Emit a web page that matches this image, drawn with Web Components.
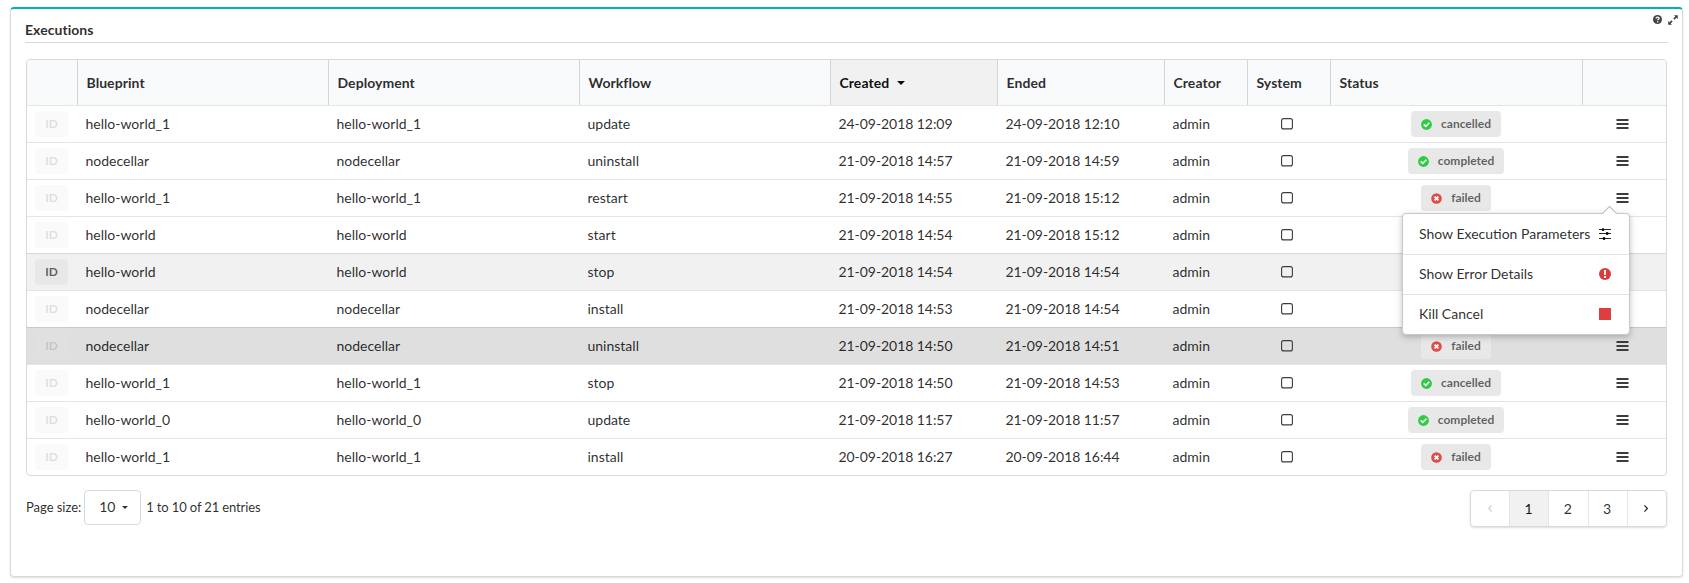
<!DOCTYPE html>
<html lang="en">
<head>
<meta charset="utf-8">
<title>Executions</title>
<style>
html,body{margin:0;background:#fff;font:14px/18px Lato,"Liberation Sans",sans-serif;color:rgba(0,0,0,.84)}
body{padding:7px 6px 6px 10px;height:583px;box-sizing:border-box}
</style>
</head>
<body>
<ui-widget>
  <span slot="title">Executions</span>
  <executions-table></executions-table>
  <table-footer></table-footer>
</ui-widget>
<script>
const define = (name, css, render) => customElements.define(name, class extends HTMLElement {
  connectedCallback() {
    if (this.shadowRoot) return;
    const t = document.createElement('template');
    t.innerHTML = `<style>*,:host{box-sizing:border-box}${css}</style>${render(this)}`;
    this.attachShadow({mode: 'open'}).append(t.content.cloneNode(true));
  }
});

const icons = {
  help: [9, 9, '<circle cx="4.5" cy="4.5" r="4.5" fill="currentColor"/><path d="M3 3.5Q3.1 2.1 4.6 2.1T6.1 3.4C6.1 4.3 4.6 4.3 4.6 5.3M4.6 6.2V7.4" fill="none" stroke="#fff" stroke-width="1.3"/>'],
  expand: [10, 10, '<path d="M6 .2H9.8V4L8.5 2.7 6.4 4.7 5.3 3.6 7.3 1.5ZM.2 6L1.5 7.3 3.6 5.3 4.7 6.4 2.7 8.5 4 9.8H.2Z" fill="currentColor"/>'],
  box: [12, 12, '<rect x=".6" y=".6" width="10.8" height="10.3" rx="2" fill="none" stroke="currentColor" stroke-width="1.1"/>'],
  menu: [13, 10, '<path d="M.5 0H12.5V2H.5ZM.5 4H12.5V6H.5ZM.5 8H12.5V10H.5Z" fill="currentColor"/>'],
  check: [11, 11, '<circle cx="5.5" cy="5.5" r="5.4" fill="#2ecc40"/><path d="M2.7 5.3L4.8 7.3 8.4 3.8" fill="none" stroke="#fff" stroke-width="1.6"/>'],
  fail: [11, 11, '<circle cx="5.5" cy="5.5" r="5.3" fill="#e04b4b"/><path d="M3.6 3.6L7.4 7.4M7.4 3.6L3.6 7.4" stroke="#fff" stroke-width="1.9"/>'],
  sliders: [12, 12, '<path d="M0 1.5H12M0 5.5H12M0 10.5H12" stroke="currentColor" stroke-width="1.1"/><path d="M4 .2V3M8.2 4.1V6.9M5 9.1V11.9" stroke="currentColor" stroke-width="2.2"/>'],
  error: [12, 12, '<circle cx="6" cy="6" r="6" fill="#db3b3b"/><path d="M4.9 2H7.1L6.8 7H5.2ZM5 8H7V10H5Z" fill="#fff"/>'],
  stop: [12, 12, '<path d="M0 0H12V12H0Z" fill="#e03e3e"/>'],
  caret: [8, 4, '<path d="M0 0H8L4 4Z" fill="currentColor"/>'],
  left: [4, 7, '<path d="M3.6.4L.7 3.5 3.6 6.6" fill="none" stroke="currentColor" stroke-width="1.1"/>'],
  right: [4, 7, '<path d="M.4.4L3.3 3.5.4 6.6" fill="none" stroke="currentColor" stroke-width="1.2"/>']
};
define('ui-icon', ':host{display:inline-flex;flex:none}svg{display:block}', el => {
  const [w, h, body] = icons[el.getAttribute('name')];
  const width = el.getAttribute('width') || w;
  return `<svg width="${width}" height="${h * width / w}" viewBox="0 0 ${w} ${h}">${body}</svg>`;
});

define('ui-widget', `
:host{display:flex;flex-direction:column;height:570px;width:1673px;border:1px solid #d9dadb;border-top:2px solid #00b5ad;border-radius:4px;box-shadow:0 1px 2px rgba(34,36,38,.15);padding:0 14px 0 14px}
header{height:34px;flex:none;border-bottom:1px solid #d8d9d9;display:flex;justify-content:space-between;margin-bottom:16px}
h5{margin:0;font-size:14px;line-height:18px;padding-top:12px;font-weight:700;letter-spacing:.05px}
.tools{display:flex;gap:6px;padding-top:6px;margin-right:-10px;color:#444}
ui-icon{height:10px}
.content{padding:0 0 0 1px}`, () => `
<header><h5><slot name="title"></slot></h5><div class="tools"><ui-icon name="help"></ui-icon><ui-icon name="expand"></ui-icon></div></header>
<div class="content"><slot></slot></div>`);

const COLS = 'grid-template-columns:50px 251px 251px 251px 167px 167px 83px 83px 252px 1fr;';
define('status-label', `
:host{display:inline-flex;align-items:center;height:26px;padding:0 10px;border-radius:4px;background:#e8e8e8;color:rgba(0,0,0,.6);font-size:12px;font-weight:700;line-height:12px}
ui-icon{margin-right:9px}`, el =>
  `<ui-icon name="${el.hasAttribute('failed') ? 'fail' : 'check'}"></ui-icon><slot></slot>`);

define('action-menu', `
:host{display:block;position:absolute;top:33px;left:1375px;z-index:5;width:228px;background:#fff;border:1px solid #c8c9ca;border-radius:4px;box-shadow:0 2px 4px rgba(34,36,38,.14),0 2px 8px rgba(34,36,38,.15)}
:host::before{content:"";position:absolute;top:-6px;right:14px;width:10px;height:10px;background:#fff;border:solid #bababc;border-width:1px 0 0 1px;transform:rotate(45deg)}
div{display:flex;height:40px;align-items:center;justify-content:space-between;padding:0 18px 1px 16px;border-top:1px solid #e4e4e5}
div:first-of-type{border:0;padding-bottom:0}`, () => `
<div>Show Execution Parameters<ui-icon name="sliders"></ui-icon></div>
<div>Show Error Details<ui-icon name="error"></ui-icon></div>
<div>Kill Cancel<ui-icon name="stop"></ui-icon></div>`);

define('execution-row', `
:host{display:grid;${COLS}height:37px;border-top:1px solid #e4e5e5;align-items:center;position:relative}
:host([hover]){background:#f1f1f1;border-color:#d6d7d7}
:host([selected]){background:#dfdfdf;border-color:#c8c9c9}
:host([open]){z-index:2}
.cell{padding-left:8.5px}
.date{letter-spacing:-.06px}
.mid{display:flex;justify-content:center}
.system{padding-right:4px}
.id{width:33px;height:26px;margin-left:8px;border-radius:4px;background:#e8e8e8;color:rgba(0,0,0,.6);font-size:12px;font-weight:700;line-height:26px;text-align:center;opacity:.2}
:host([hover]) .id{opacity:1}
ui-icon{color:#3c3c3c}
.menu{padding-right:3px}`, el => {
  const [name, flow, created, ended, status] = el.data;
  return `<div class="id">ID</div><div class="cell">${name}</div><div class="cell">${name}</div><div class="cell">${flow}</div>
<div class="cell date">${created}</div><div class="cell date">${ended}</div><div class="cell">admin</div>
<div class="mid system"><ui-icon name="box"></ui-icon></div>
<div class="mid">${status ? `<status-label ${status === 'failed' ? 'failed' : ''}>${status}</status-label>` : ''}</div>
<div class="mid menu"><ui-icon name="menu"></ui-icon></div>
${el.hasAttribute('open') ? '<slot></slot>' : ''}`;
});

const rows = [
  ['hello-world_1', 'update', '24-09-2018 12:09', '24-09-2018 12:10', 'cancelled'],
  ['nodecellar', 'uninstall', '21-09-2018 14:57', '21-09-2018 14:59', 'completed'],
  ['hello-world_1', 'restart', '21-09-2018 14:55', '21-09-2018 15:12', 'failed', 'open'],
  ['hello-world', 'start', '21-09-2018 14:54', '21-09-2018 15:12', ''],
  ['hello-world', 'stop', '21-09-2018 14:54', '21-09-2018 14:54', '', 'hover'],
  ['nodecellar', 'install', '21-09-2018 14:53', '21-09-2018 14:54', ''],
  ['nodecellar', 'uninstall', '21-09-2018 14:50', '21-09-2018 14:51', 'failed', 'selected'],
  ['hello-world_1', 'stop', '21-09-2018 14:50', '21-09-2018 14:53', 'cancelled'],
  ['hello-world_0', 'update', '21-09-2018 11:57', '21-09-2018 11:57', 'completed'],
  ['hello-world_1', 'install', '20-09-2018 16:27', '20-09-2018 16:44', 'failed']
];
customElements.define('executions-table', class extends HTMLElement {
  connectedCallback() {
    const root = this.attachShadow({mode: 'open'});
    const heads = ['', 'Blueprint', 'Deployment', 'Workflow', 'Created', 'Ended', 'Creator', 'System', 'Status', ''];
    root.innerHTML = `<style>
*{box-sizing:border-box}
:host{display:block;width:1641px;border:1px solid #d8d9d9;border-radius:4px;box-sizing:border-box}
.head{display:grid;${COLS}height:45px;background:#f9fafb;border-radius:4px 4px 0 0;font-weight:700;letter-spacing:.05px}
.head div{display:flex;align-items:center;padding-left:8.5px;border-left:1px solid #d4d5d6}
.head div:first-child{border:0}
.head .sorted{background:#f1f1f1;color:rgba(0,0,0,.95)}
.sorted ui-icon{margin-left:8px}
</style><div class="head">${heads.map(h => `<div class="${h === 'Created' ? 'sorted' : ''}">${h}${h === 'Created' ? '<ui-icon name="caret"></ui-icon>' : ''}</div>`).join('')}</div>`;
    for (const r of rows) {
      const row = document.createElement('execution-row');
      row.data = r;
      if (r[5]) row.setAttribute(r[5], '');
      if (r[5] === 'open') row.append(document.createElement('action-menu'));
      root.append(row);
    }
  }
});

define('page-size', `
:host{display:flex;align-items:center;height:35px;font-size:13px}
span{letter-spacing:-.13px;padding-bottom:1px}
span:first-of-type{letter-spacing:-.03px}
.select{display:flex;align-items:center;height:35px;width:57px;border:1px solid #d8d9da;border-radius:4px;margin:0 5px 0 3px;padding:0 0 1px 14px;font-size:14px}
ui-icon{margin-left:7px;color:#333}`, () => `<span>Page size:</span><div class="select">10<ui-icon name="caret" width="6"></ui-icon></div><span>1 to 10 of 21 entries</span>`);

define('page-nav', `
:host{display:flex;width:197px;height:37px;border:1px solid #d8d9da;border-radius:4px;box-shadow:0 1px 2px rgba(34,36,38,.15)}
div{flex:1;display:flex;align-items:center;justify-content:center;padding-right:1px;border-left:1px solid #e4e5e5}
div:first-of-type{flex:0 0 38px;border:0;color:#ccc;padding:0}
.on{background:#f1f1f1;color:rgba(0,0,0,.95)}`, () => `
<div><ui-icon name="left"></ui-icon></div><div class="on">1</div><div>2</div><div>3</div><div><ui-icon name="right"></ui-icon></div>`);

define('table-footer', ':host{display:flex;justify-content:space-between;width:1641px;margin-top:14px}', () => '<page-size></page-size><page-nav></page-nav>');
</script>
</body>
</html>
